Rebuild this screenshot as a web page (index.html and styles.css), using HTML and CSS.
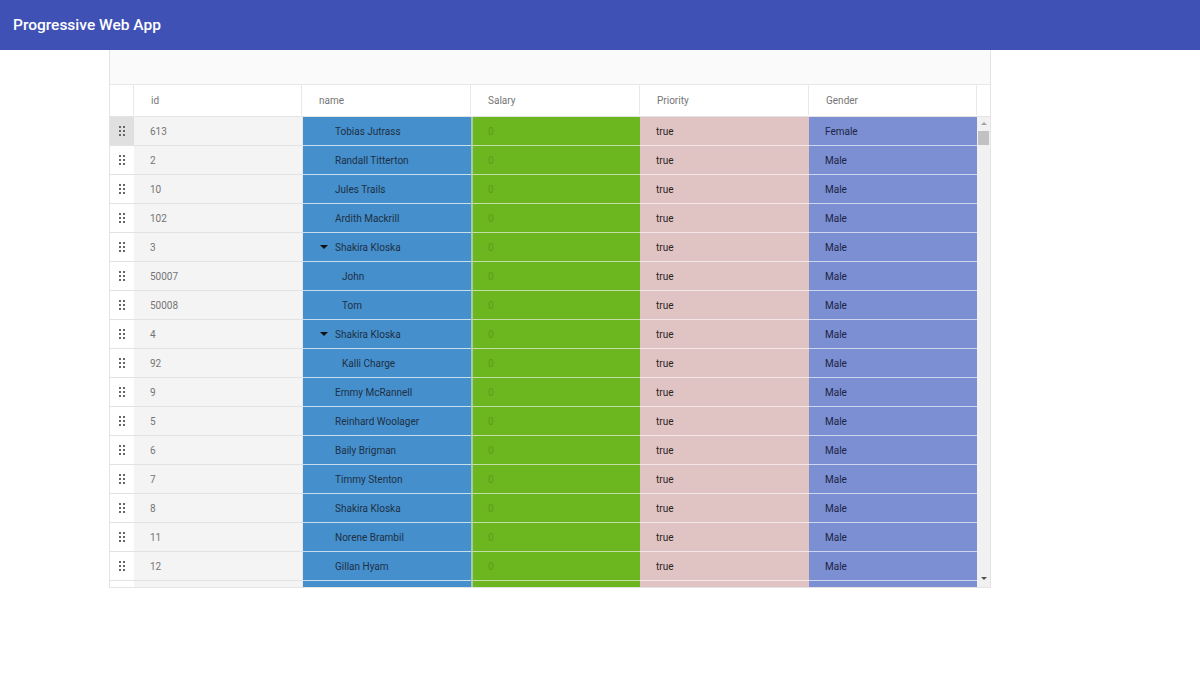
FILE: index.html
```html
<!DOCTYPE html>
<html lang="en">
<head>
    <meta charset="UTF-8">
    <meta name="viewport" content="width=device-width, initial-scale=1.0">
    <title>Progressive Web App</title>
    <link rel="stylesheet" href="styles.css">
</head>
<body>
    <header class="app-bar">
        <h1>Progressive Web App</h1>
    </header>

    <div class="grid">
        <div class="grid-toolbar"></div>

        <div class="grid-head">
            <div class="cell drag"></div>
            <div class="cell">id</div>
            <div class="cell">name</div>
            <div class="cell">Salary</div>
            <div class="cell">Priority</div>
            <div class="cell">Gender</div>
            <div class="cell gutter"></div>
        </div>

        <div class="grid-body">
            <div class="rows" id="rows">
                <!-- rows are filled in by the script below -->
            </div>
            <div class="scrollbar">
                <span class="arrow up"></span>
                <span class="thumb"></span>
                <span class="arrow down"></span>
            </div>
        </div>
    </div>

    <script>
        const rows = [
            { id: 613, name: 'Tobias Jutrass', gender: 'Female', selected: true },
            { id: 2, name: 'Randall Titterton' },
            { id: 10, name: 'Jules Trails' },
            { id: 102, name: 'Ardith Mackrill' },
            { id: 3, name: 'Shakira Kloska', parent: true },
            { id: 50007, name: 'John', child: true },
            { id: 50008, name: 'Tom', child: true },
            { id: 4, name: 'Shakira Kloska', parent: true },
            { id: 92, name: 'Kalli Charge', child: true },
            { id: 9, name: 'Emmy McRannell' },
            { id: 5, name: 'Reinhard Woolager' },
            { id: 6, name: 'Baily Brigman' },
            { id: 7, name: 'Timmy Stenton' },
            { id: 8, name: 'Shakira Kloska' },
            { id: 11, name: 'Norene Brambil' },
            { id: 12, name: 'Gillan Hyam' },
            { id: '', name: '' }
        ];

        const dots = '<svg width="6" height="10" viewBox="0 0 6 10"><g fill="#666">' +
            '<rect x="0" y="0" width="2" height="2"/><rect x="4" y="0" width="2" height="2"/>' +
            '<rect x="0" y="4" width="2" height="2"/><rect x="4" y="4" width="2" height="2"/>' +
            '<rect x="0" y="8" width="2" height="2"/><rect x="4" y="8" width="2" height="2"/>' +
            '</g></svg>';

        const container = document.getElementById('rows');

        rows.forEach(r => {
            const row = document.createElement('div');
            row.className = 'row';
            const last = r.id === '';

            let nameHtml = r.name;
            let nameClass = 'cell name';
            if (r.parent) {
                nameClass += ' parent';
                nameHtml = '<span class="caret"></span>' + r.name;
            }
            if (r.child) nameClass += ' child';

            row.innerHTML =
                '<div class="cell drag' + (r.selected ? ' selected' : '') + '">' + (last ? '' : dots) + '</div>' +
                '<div class="cell id">' + r.id + '</div>' +
                '<div class="' + nameClass + '">' + nameHtml + '</div>' +
                '<div class="cell salary">' + (last ? '' : '0') + '</div>' +
                '<div class="cell priority">' + (last ? '' : 'true') + '</div>' +
                '<div class="cell gender">' + (last ? '' : (r.gender || 'Male')) + '</div>';

            container.appendChild(row);
        });
    </script>
</body>
</html>
```

FILE: styles.css
```css
body {
    margin: 0;
    padding: 0;
    font-family: Roboto, "Liberation Sans", sans-serif;
    background-color: #fff;
}

.app-bar {
    height: 50px;
    background-color: #3f51b5;
    display: flex;
    align-items: center;
    padding: 0 13px;
    box-sizing: border-box;
}

.app-bar h1 {
    margin: 0;
    color: #fff;
    font-size: 15.5px;
    font-weight: 500;
}

/* grid */
.grid {
    width: 882px;
    margin-left: 109px;
    border: 1px solid #e4e4e4;
    border-top: none;
    box-sizing: border-box;
    font-size: 10px;
}

.grid-toolbar {
    height: 35px;
    background-color: #fafafa;
    border-bottom: 1px solid #e8e8e8;
    box-sizing: border-box;
}

.grid-head,
.row {
    display: grid;
    grid-template-columns: 24px 168px 169px 169px 169px 168px;
}

.grid-head {
    grid-template-columns: 24px 168px 169px 169px 169px 168px 1fr;
    height: 32px;
    padding-bottom: 1px;
    border-bottom: 1px solid #e4e4e4;
    box-sizing: border-box;
    color: #757575;
}

.grid-head .cell {
    border-right: 1px solid #e8e8e8;
    padding-left: 17px;
}

.grid-head .cell.drag,
.grid-head .cell.gutter {
    padding-left: 0;
}

.grid-head .cell.gutter {
    border-right: none;
}

.cell {
    display: flex;
    align-items: center;
    box-sizing: border-box;
    white-space: nowrap;
    overflow: hidden;
}

.grid-body {
    display: flex;
    height: 470px;
    overflow: hidden;
}

.rows {
    flex: 1;
}

.row {
    height: 29px;
}

.row .cell {
    border-bottom: 1px solid #e2e2e2;
    padding-left: 16px;
}

.row .cell.drag {
    padding-left: 0;
    justify-content: center;
    background-color: #fff;
}

.row .cell.drag.selected {
    background-color: #e0e0e0;
}

.row .cell.id {
    background-color: #f4f4f4;
    color: #757575;
}

.row .cell.name {
    background-color: #448fcc;
    color: #1f2f45;
    padding-left: 32px;
    border-left: 1px solid #e8e8e8;
    border-bottom-color: #c7dcef;
}

.row .cell.name.parent {
    padding-left: 17px;
}

.row .cell.name.child {
    padding-left: 39px;
}

.caret {
    width: 0;
    height: 0;
    border-left: 4px solid transparent;
    border-right: 4px solid transparent;
    border-top: 4px solid #111;
    margin-right: 7px;
}

.row .cell.salary {
    background-color: #6cb620;
    color: #5e9c1c;
    border-left: 2px solid #a6c9a6;
    padding-left: 15px;
    border-bottom-color: #c2e0a6;
}

.row .cell.priority {
    background-color: #e0c4c4;
    color: #2b2323;
    border-bottom-color: #f2e6e6;
}

.row .cell.gender {
    background-color: #7b8fd2;
    color: #1d2444;
    border-bottom-color: #cdd5f0;
}

/* fake scrollbar */
.scrollbar {
    width: 13px;
    background-color: #f1f1f1;
    position: relative;
}

.scrollbar .thumb {
    position: absolute;
    top: 14px;
    left: 1px;
    width: 11px;
    height: 14px;
    background-color: #c1c1c1;
}

.scrollbar .arrow {
    position: absolute;
    left: 4px;
    width: 0;
    height: 0;
    border-left: 3px solid transparent;
    border-right: 3px solid transparent;
}

.scrollbar .arrow.up {
    top: 5px;
    border-bottom: 3px solid #a3a3a3;
}

.scrollbar .arrow.down {
    bottom: 7px;
    border-top: 3px solid #505050;
}
```
